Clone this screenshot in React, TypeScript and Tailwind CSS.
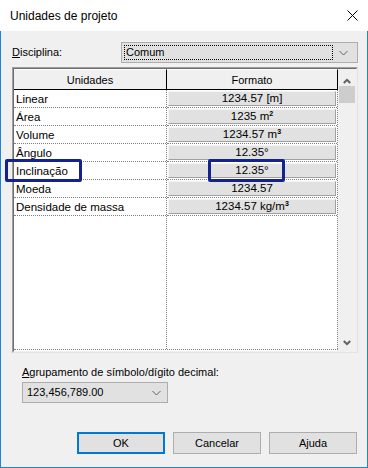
import React from "react";

const rows: { name: string; fmt: React.ReactNode }[] = [
  { name: "Linear", fmt: "1234.57 [m]" },
  {
    name: "Área",
    fmt: (
      <>
        1235 m<span className="relative -top-[4px] text-[7px] font-bold">2</span>
      </>
    ),
  },
  {
    name: "Volume",
    fmt: (
      <>
        1234.57 m<span className="relative -top-[4px] text-[7px] font-bold">3</span>
      </>
    ),
  },
  { name: "Ângulo", fmt: "12.35°" },
  { name: "Inclinação", fmt: "12.35°" },
  { name: "Moeda", fmt: "1234.57" },
  {
    name: "Densidade de massa",
    fmt: (
      <>
        1234.57 kg/m<span className="relative -top-[4px] text-[7px] font-bold">3</span>
      </>
    ),
  },
];

function Chevron() {
  return (
    <svg width="9" height="6" viewBox="0 0 9 6">
      <path d="M0.5 1 L4.5 5 L8.5 1" fill="none" stroke="#606060" strokeWidth="1" />
    </svg>
  );
}

function ScrollArrow({ up = false }: { up?: boolean }) {
  return (
    <svg width="8" height="6" viewBox="0 0 8 6">
      <path
        d={up ? "M0.8 5 L4 1.8 L7.2 5" : "M0.8 1 L4 4.2 L7.2 1"}
        fill="none"
        stroke="#606060"
        strokeWidth="2"
      />
    </svg>
  );
}

export default function App() {
  return (
    <div className="relative w-[368px] h-[468px] flex flex-col bg-white font-['Liberation_Sans',Arial,sans-serif] text-black overflow-hidden">
      {/* title bar */}
      <div className="h-[31px] shrink-0 flex items-center justify-between pl-[10px] pr-[10px] bg-white">
        <span className="text-[12px] leading-none">Unidades de projeto</span>
        <svg width="11" height="11" viewBox="0 0 11 11">
          <path d="M0.5 0.5 L10.5 10.5 M10.5 0.5 L0.5 10.5" stroke="#000" strokeWidth="1" />
        </svg>
      </div>

      {/* body */}
      <div className="flex-1 flex flex-col bg-[#f0f0f0] border-x border-b border-[#1c84d6] pl-[11px] pr-[9px] pt-[11px] text-[11px]">
        {/* Disciplina */}
        <div className="flex items-center h-[21px]">
          <span className="w-[109px] leading-none">
            <span className="underline">D</span>isciplina:
          </span>
          <div className="flex-1 h-[21px] bg-[#e1e1e1] border border-[#adadad] flex items-center pl-[2px] pr-[4px]">
            <div className="flex-1 h-[15px] border border-dotted border-black flex items-center pl-[1px] leading-none">
              Comum
            </div>
            <div className="w-[20px] flex justify-center">
              <Chevron />
            </div>
          </div>
        </div>

        {/* table */}
        <div className="mt-[4px] h-[286px] border-l border-t border-[#a0a0a0] border-r border-b border-r-[#e3e3e3] border-b-[#e3e3e3]">
          <div className="h-full flex border-l border-t border-[#6d6d6d] border-r border-b border-r-[#f0f0f0] border-b-[#f0f0f0]">
            {/* grid */}
            <div className="w-[324px] flex flex-col bg-white">
              <div className="h-[21px] flex shrink-0">
                <div className="w-[153px] bg-[#f0f0f0] border-t border-white border-r border-b border-r-black border-b-black flex items-center justify-center leading-none pt-[1px]">
                  Unidades
                </div>
                <div className="w-[171px] bg-[#f0f0f0] border-t border-white border-r border-b border-r-black border-b-black flex items-center justify-center leading-none pt-[1px]">
                  Formato
                </div>
              </div>
              <div className="flex-1 flex border-b border-dotted border-[#808080] mb-[1px]">
                <div className="w-[153px] border-r border-dotted border-[#808080] flex flex-col">
                  {rows.map((r) => (
                    <div
                      key={r.name}
                      className="h-[18px] border-b border-dotted border-[#808080] flex items-center pl-[2px] pt-[2px] leading-none text-[11.5px]"
                    >
                      {r.name}
                    </div>
                  ))}
                </div>
                <div className="w-[171px] border-r border-dotted border-[#808080] flex flex-col">
                  {rows.map((r) => (
                    <div
                      key={r.name}
                      className="h-[18px] border-b border-dotted border-[#808080] px-[1px] py-[1px]"
                    >
                      <div className="h-full bg-[#e1e1e1] border border-t-[#f4f4f4] border-l-[#f4f4f4] border-r-[#a0a0a0] border-b-[#a0a0a0] flex items-center justify-center leading-none pt-[1px] text-[11.5px]">
                        {r.fmt}
                      </div>
                    </div>
                  ))}
                </div>
              </div>
            </div>
            {/* scrollbar */}
            <div className="flex-1 bg-[#f0f0f0] flex flex-col">
              <div className="h-[17px] flex items-end justify-center pb-[2px]">
                <ScrollArrow up />
              </div>
              <div className="h-[17px] mx-[1px] bg-[#cdcdcd]" />
              <div className="flex-1" />
              <div className="h-[17px] flex items-center justify-center">
                <ScrollArrow />
              </div>
            </div>
          </div>
        </div>

        {/* grouping */}
        <div className="mt-[12px] pl-[10px] leading-[14px]">
          <span className="underline">A</span>grupamento de símbolo/dígito decimal:
        </div>
        <div className="mt-[3px] ml-[10px] w-[146px] h-[21px] bg-[#e1e1e1] border border-[#adadad] flex items-center pl-[4px] pr-[4px]">
          <span className="flex-1 leading-none">123,456,789.00</span>
          <div className="w-[14px] flex justify-center">
            <Chevron />
          </div>
        </div>

        {/* buttons */}
        <div className="mt-[29px] flex justify-end gap-[8px] pr-[1px]">
          <button className="w-[88px] h-[22px] bg-[#e1e1e1] border-2 border-[#0078d7] leading-none">OK</button>
          <button className="w-[88px] h-[22px] bg-[#e1e1e1] border border-[#adadad] leading-none">Cancelar</button>
          <button className="w-[88px] h-[22px] bg-[#e1e1e1] border border-[#adadad] leading-none">Ajuda</button>
        </div>
      </div>

      {/* highlight boxes */}
      <div className="absolute left-[5px] top-[159px] w-[77px] h-[23px] border-[3px] border-[#13228c] rounded-[2px]" />
      <div className="absolute left-[208px] top-[159px] w-[77px] h-[23px] border-[3px] border-[#13228c] rounded-[2px]" />
    </div>
  );
}
